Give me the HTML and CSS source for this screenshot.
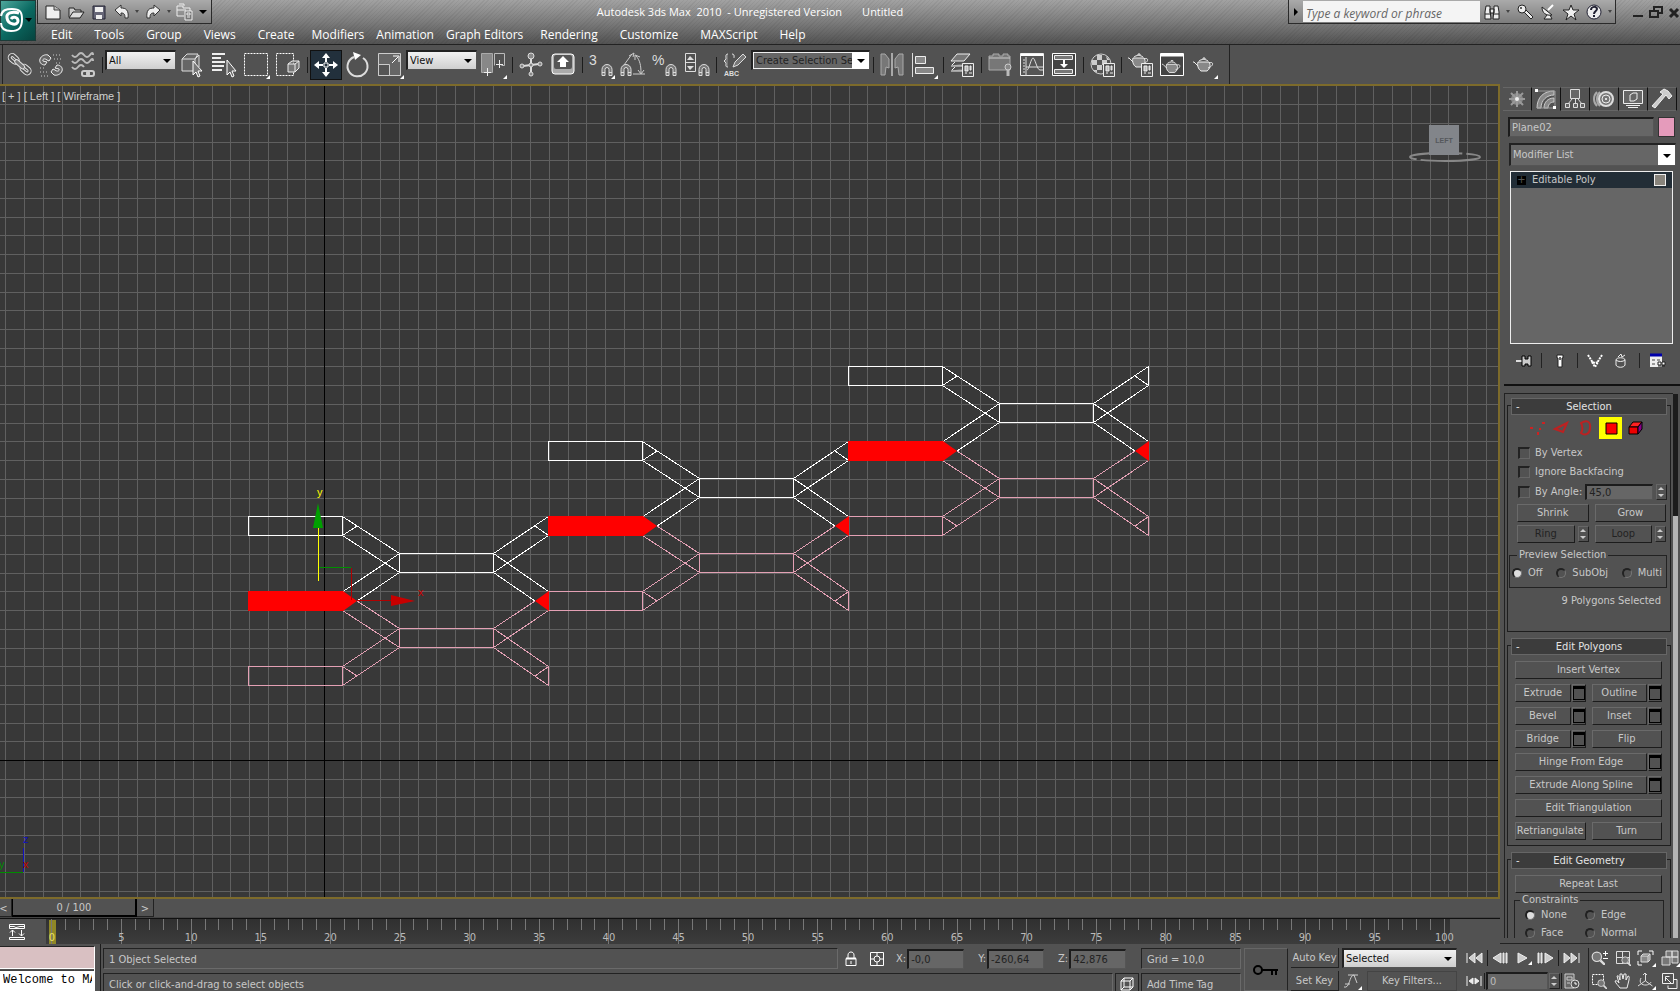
FILE: index.html
```html
<!DOCTYPE html>
<html lang="en">
<head>
  <meta charset="UTF-8" />
  <meta name="viewport" content="width=device-width, initial-scale=1" />
  <title>Autodesk 3ds Max 2010 - Unregistered Version</title>
  <link rel="stylesheet" href="styles.css">
</head>
<body>
  <!-- shared icon parts -->
  <svg class="defs" width="0" height="0">
    <symbol id="magnet" viewBox="0 0 12 13"><path d="M1 12V6a5 5 0 0 1 10 0v6H8V6a2 2 0 0 0-4 0v6zM1 9h3M8 9h3" fill="#777" stroke="#ddd"/></symbol>
    <symbol id="panel" viewBox="0 0 12 14"><path d="M.5.5h11v13H.5z" fill="#555" stroke="#eee"/><path d="M3 3h3v5H3zM8 3h1v4H8zM3 10h2M7 10h3" fill="#bbb" stroke="#eee"/></symbol>
    <symbol id="teapot" viewBox="0 0 22 16"><path d="M5 5h11c2 3 1 7-2 9H8C5 12 4 8 5 5z" fill="#888" stroke="#eee"/><path d="M6 4c2-2 7-2 9 0M10 2V1h2v1M5 9 1 5H0M16 6c5-2 5 3-1 5" fill="none" stroke="#eee"/></symbol>
    <symbol id="corner" viewBox="0 0 4 4"><path d="M4 0v4H0z" fill="#fff"/></symbol>
    <symbol id="lens" viewBox="0 0 12 12"><circle cx="5" cy="5" r="4" fill="#777" stroke="#ddd"/><path d="m8 8 4 4" stroke="#ddd" stroke-width="2"/></symbol>
  </svg>

  <header class="titlebar">
    <button class="app-btn" aria-label="Application menu">
      <svg width="36" height="41" viewBox="0 0 36 41"><path d="M1 16C2 10 6 9 12 9c8 0 10 3 10 10 0 9-3 12-11 12C4 31 1 28 1 23" fill="none" stroke="#fff" stroke-width="2"/><path d="M19 13C12 11 6 13 7 18c1 7 11 8 11 3 0-4-5-5-7-2" fill="none" stroke="#fff" stroke-width="3"/><path d="M25 18h7l-3 4z" fill="#000"/></svg>
    </button>
    <div class="title-rows">
      <div class="title-row">
        <div class="quick">
          <button aria-label="New"><svg width="18" height="18"><path d="M2 3h8l6 4v9H2z" fill="#eee" stroke="#222"/><path d="M10 3v4h6" fill="#bbb" stroke="#444"/></svg></button>
          <button aria-label="Open"><svg width="18" height="18"><path d="M2 14V5h5l1 2h6v2" fill="#ccc" stroke="#222"/><path d="m2 15 4-6h11l-4 6z" fill="#ddd" stroke="#222"/></svg></button>
          <button aria-label="Save"><svg width="18" height="18"><path d="M3 3h12v13H3z" fill="#667" stroke="#223"/><path d="M5 4h8v5H5zM6 12h6v4H6z" fill="#eee"/></svg></button>
          <button aria-label="Undo"><svg width="18" height="18"><path d="m2 7 6-5v3c5 0 8 2 7 10h-3c0-4-1-5-4-5v3z" fill="#eee" stroke="#333"/></svg></button>
          <i class="tri dim"></i>
          <button aria-label="Redo"><svg width="18" height="18"><path d="m16 7-6-5v3c-5 0-8 2-7 10h3c0-4 1-5 4-5v3z" fill="#eee" stroke="#333"/></svg></button>
          <i class="tri dim"></i>
          <button aria-label="Project folder"><svg width="18" height="18"><path d="M1 3h6v2h7v4M1 3v10h7M3 1h5v2M1 7h9" fill="none" stroke="#eee"/><path d="M9 8h7v9H9zM11 10h3v2h-3zM11 14h3" fill="#777" stroke="#eee"/></svg></button>
          <i class="tri bar"></i>
        </div>
        <div class="title-text"><span>Autodesk 3ds Max&nbsp; 2010&nbsp; - Unregistered Version</span><span>Untitled</span></div>
        <div class="info">
          <i class="tri right"></i>
          <input type="text" placeholder="Type a keyword or phrase" aria-label="Search">
          <button aria-label="Search"><svg width="18" height="18"><path d="M3 3h4v4l1 9H2V9zM11 3h4l1 6v7h-6l1-9zM7 6h4v4H7z" fill="#eee" stroke="#222"/><path d="M2 11h6M10 11h6" stroke="#222"/></svg></button>
          <i class="tri dim"></i>
          <button aria-label="Subscription"><svg width="18" height="18"><path d="m8 9 7 7 2-2-7-7" fill="#eee" stroke="#222"/><circle cx="6" cy="6" r="4" fill="#eee" stroke="#222"/><circle cx="5" cy="5" r="1" fill="#333"/></svg></button>
          <button aria-label="Communication"><svg width="18" height="18"><path d="M3 4c0 6 4 9 10 8zM8 12l-3 4h8l-2-4" fill="#eee" stroke="#222"/><path d="m9 7 5-5" stroke="#fff" stroke-width="2"/></svg></button>
          <button aria-label="Favorites"><svg width="18" height="18"><path d="m9 2 2 5h6l-5 4 2 6-5-4-5 4 2-6-5-4h6z" fill="#eee" stroke="#222"/></svg></button>
          <button aria-label="Help"><svg width="18" height="18"><circle cx="9" cy="9" r="7" fill="#eee" stroke="#223"/><path d="M6 7c0-4 6-4 6-1 0 2-3 2-3 5M9 12v2" fill="none" stroke="#223" stroke-width="2"/></svg></button>
          <i class="tri dim"></i>
        </div>
        <div class="win-btns">
          <button aria-label="Minimize"><svg width="12" height="14"><path d="M1 11h10" stroke="#222" stroke-width="2"/></svg></button>
          <button aria-label="Restore"><svg width="14" height="14"><path d="M1 6h8v6H1zM5 5V2h8v6h-3" fill="none" stroke="#222" stroke-width="2"/></svg></button>
          <button aria-label="Close"><svg width="12" height="14"><path d="m2 4 8 8M10 4l-8 8" stroke="#222" stroke-width="3"/></svg></button>
        </div>
      </div>
      <nav class="menu">
        <a href="#">Edit</a><a href="#">Tools</a><a href="#">Group</a><a href="#">Views</a><a href="#">Create</a><a href="#" class="tight">Modifiers</a><a href="#" class="tight">Animation</a><a href="#" class="tight">Graph Editors</a><a href="#">Rendering</a><a href="#">Customize</a><a href="#">MAXScript</a><a href="#">Help</a>
      </nav>
    </div>
  </header>

  <div class="toolbar">
    <div class="tools">
      <button aria-label="Select and Link"><svg width="28" height="28"><g fill="none" stroke="#e4e4e4"><g transform="rotate(42 14 14)"><rect x="0" y="9" width="12" height="8" rx="4"/><rect x="3" y="12" width="6" height="2" rx="1"/><rect x="16" y="9" width="12" height="8" rx="4"/><rect x="19" y="12" width="6" height="2" rx="1"/><rect x="8" y="11" width="12" height="4" rx="2" fill="#777"/></g></g></svg></button>
      <button aria-label="Unlink Selection"><svg width="28" height="28"><path d="M8 14C4 14 2 11 3 8s5-5 8-4l3 3-2 3-2-1C8 7 5 8 6 10l4 1zM20 14c4 0 6 3 5 6s-5 5-8 4l-3-3 2-3 2 1c2 2 5 1 4-1l-4-1z" fill="#666" stroke="#eee"/><path d="M16 4h8M17 8h8M19 12h6M3 17h6M3 21h8M4 25h7" stroke="#ccc" stroke-dasharray="1 2"/></svg></button>
      <button aria-label="Bind to Space Warp"><svg width="28" height="28"><path d="M3 4q3 4 6 0t6 0 6 0 3 0M3 10q3 4 6 0t6 0 6 0 3 0M3 16q3 4 6 0t6 0" fill="none" stroke="#bbb" stroke-width="2"/><rect x="13" y="20" width="7" height="5" rx="2" fill="none" stroke="#ccc" stroke-width="2"/><rect x="18" y="20" width="7" height="5" rx="2" fill="none" stroke="#ccc" stroke-width="2"/></svg></button>
      <i class="sep"></i>
      <label class="select w70"><select aria-label="Selection filter"><option>All</option></select></label>
      <button aria-label="Select Object"><svg width="28" height="28"><path d="m4 8 5-5h11l-3 5v12H4zM4 8h13l4-4v12" fill="#666" stroke="#ddd"/><path d="M15 10v14l3-3 2 5 2-1-2-5h4z" fill="#777" stroke="#fff"/></svg></button>
      <button aria-label="Select by Name"><svg width="28" height="28"><path d="M2 3h13M2 7h9M2 11h13M2 15h12M2 19h10" stroke="#eee" stroke-width="2"/><path d="M17 9v15l3-3 2 5 2-1-2-5h4z" fill="#666" stroke="#fff"/></svg></button>
      <button aria-label="Rectangular Selection Region"><svg width="28" height="28"><path d="M2.500 2.500h23v22h-23z" fill="none" stroke="#fff" stroke-dasharray="2 1"/><use href="#corner" x="24" y="24" width="4" height="4"/></svg></button>
      <button aria-label="Window/Crossing"><svg width="28" height="28"><path d="M2.500 2.500h17v22h-17z" fill="none" stroke="#fff" stroke-dasharray="2 1"/><path d="m14 13 4-3h7v7l-4 4h-7zM14 13h7l4-3M21 13v8" fill="#777" stroke="#eee"/></svg></button>
      <i class="sep"></i>
      <button class="on" aria-label="Select and Move"><svg width="28" height="28"><path d="m14 2 4 5h-3v4h-2V7h-3zM14 26l4-5h-3v-4h-2v4h-3zM2 14l5-4v3h4v2H7v3zM26 14l-5-4v3h-4v2h4v3z" fill="#fff"/><path d="M12 12h4v4h-4z" fill="none" stroke="#fff"/></svg></button>
      <button aria-label="Select and Rotate"><svg width="28" height="28"><path d="M19 7a10 10 0 1 1-9-1" fill="none" stroke="#ddd" stroke-width="2"/><path d="m9 1 8 3-6 5z" fill="#fff"/></svg></button>
      <button aria-label="Select and Scale"><svg width="28" height="28"><path d="M2.500 2.500h22v22h-22z" fill="#666" stroke="#ccc"/><path d="M2.500 13.500h11v11h-11z" fill="#555" stroke="#ccc"/><path d="m16 12 6-6M17 5h6v6" fill="none" stroke="#fff"/><use href="#corner" x="24" y="24" width="4" height="4"/></svg></button>
      <label class="select w70"><select aria-label="Reference coordinate system"><option>View</option></select></label>
      <button aria-label="Use Pivot Point Center"><svg width="28" height="28"><path d="M2.500 2.500h11v19h-11z" fill="#888" stroke="#aaa"/><path d="M15.500 14.500v-12h10v12h-3" fill="none" stroke="#bbb"/><path d="M8.500 17v8M5 21.500h7M20.500 9v8M17 13.500h7" stroke="#eee"/><use href="#corner" x="24" y="24" width="4" height="4"/></svg></button>
      <i class="sep"></i>
      <button aria-label="Select and Manipulate"><svg width="28" height="28"><g fill="#888" stroke="#ddd"><path d="M14 7v14M6 15l16-2" stroke-width="2"/><circle cx="14" cy="5" r="3"/><circle cx="14" cy="23" r="2"/><circle cx="5" cy="15" r="2"/><circle cx="23" cy="13" r="2"/><circle cx="14" cy="14" r="2"/></g></svg></button>
      <button aria-label="Keyboard Shortcut Override"><svg width="28" height="28"><rect x="3" y="3" width="22" height="20" rx="3" fill="#aaa" stroke="#fff"/><rect x="5" y="4" width="18" height="14" rx="2" fill="#555"/><path d="m14 5 6 6h-3v5h-6v-5H8z" fill="#fff"/></svg></button>
      <i class="sep"></i>
      <button aria-label="Snaps Toggle"><svg width="28" height="28"><text x="2" y="14" class="ico-num">3</text><use href="#magnet" x="14" y="12" width="12" height="14"/><use href="#corner" x="24" y="24" width="4" height="4"/></svg></button>
      <button aria-label="Angle Snap"><svg width="28" height="28"><path d="m5 14 8-11M14 23h12M17 5c4 4 5 10 5 17M10 5l5-3-1 4M19 19l3 4 3-4M16 9V4l5 2" fill="none" stroke="#ccc"/><use href="#magnet" x="1" y="12" width="12" height="14"/></svg></button>
      <button aria-label="Percent Snap"><svg width="28" height="28"><text x="1" y="14" class="ico-num">%</text><use href="#magnet" x="14" y="12" width="12" height="14"/></svg></button>
      <button aria-label="Spinner Snap"><svg width="28" height="28"><path d="M2.500 2.500h10v18h-10zM2.500 11.500h10" fill="none" stroke="#ddd"/><path d="m4 9 3-4 4 4zM4 15l3 4 4-4z" fill="#ddd"/><use href="#magnet" x="15" y="12" width="12" height="14"/></svg></button>
      <i class="sep"></i>
      <button aria-label="Edit Named Selection Sets"><svg width="28" height="28"><path d="M7 3c-3 0-2 3-2 5l-2 2 2 2c0 2-1 4 2 4M11 3c3 0 2 3 2 4M12 16l2-5 8-8 3 3-8 8z" fill="#777" stroke="#ddd"/><text x="3" y="25" class="ico-abc">ABC</text></svg></button>
      <label class="select dark w119"><select aria-label="Named selection sets"><option>Create Selection Set</option></select></label>
      <i class="sep"></i>
      <button aria-label="Mirror"><svg width="28" height="28"><path d="M3 3h4l4 5v9l-3-1-1 8H3zM25 3h-4l-4 5v9l3-1 1 8h4z" fill="#777" stroke="#aaa"/><path d="M14 2v23" stroke="#fff"/></svg></button>
      <button aria-label="Align"><svg width="28" height="28"><path d="M2.500 2v24" stroke="#ddd"/><path d="M5.500 5.500h10v7h-10zM5.500 16.500h18v6h-18z" fill="#888" stroke="#eee"/><use href="#corner" x="24" y="24" width="4" height="4"/></svg></button>
      <i class="sep"></i>
      <button aria-label="Layer Manager"><svg width="28" height="28"><path d="m9 3h13l-6 7H3zM3 15h11l2-3M3 20h11l2-3M4 14l3-3M4 19l3-3" fill="#777" stroke="#eee"/><use href="#panel" x="14" y="12" width="12" height="14"/></svg></button>
      <i class="sep"></i>
      <button aria-label="Graphite Modeling Tools"><svg width="28" height="28"><path d="M3 5h4V3h6v2h4V3h5v2h2v14H3z" fill="#777" stroke="#aaa"/><path d="M3 7h21" stroke="#ccc"/><path d="M22 17v8" stroke="#bbb" stroke-width="3"/><circle cx="22" cy="16" r="3" fill="#888" stroke="#ccc"/></svg></button>
      <button aria-label="Curve Editor"><svg width="28" height="28"><path d="M2.500 2.500h23v22h-23z" fill="#555" stroke="#eee"/><path d="M3 4h22" stroke="#fff" stroke-width="2"/><path d="M8 6v19M5 9h2M5 12h2M5 15h2M5 18h2M5 21h2M8 16h17M9 19c2 0 4-12 6-12s4 12 7 12h3" fill="none" stroke="#ddd"/></svg></button>
      <button aria-label="Schematic View"><svg width="28" height="28"><path d="M2.500 2.500h23v22h-23z" fill="#444" stroke="#fff"/><path d="M4.500 4.500h18v4h-18zM4.500 18.500h18v4h-18z" fill="#777" stroke="#eee"/><path d="M14 9v6" stroke="#fff" stroke-width="2"/><path d="M10 13h8l-4 4z" fill="#fff"/></svg></button>
      <i class="sep"></i>
      <button aria-label="Material Editor"><svg width="28" height="28"><circle cx="13" cy="13" r="10" fill="#555" stroke="#ccc"/><path d="M9 4h5v5H9zM4 9h5v5H4zM14 9h5v5h-5zM9 14h5v5H9zM18 5l4 4h-3zM5 19h4v3z" fill="#ccc"/><use href="#panel" x="15" y="12" width="12" height="14"/></svg></button>
      <i class="sep"></i>
      <button aria-label="Render Setup"><svg width="28" height="28"><use href="#teapot" x="2" y="2" width="22" height="16"/><use href="#panel" x="15" y="12" width="12" height="14"/></svg></button>
      <button aria-label="Rendered Frame Window"><svg width="28" height="28"><path d="M2.500 2.500h23v22h-23z" fill="#444" stroke="#fff"/><path d="M3 4h22" stroke="#fff" stroke-width="3"/><use href="#teapot" x="4" y="8" width="20" height="16"/></svg></button>
      <button aria-label="Render Production"><svg width="28" height="28"><use href="#teapot" x="3" y="6" width="22" height="16"/><use href="#corner" x="24" y="24" width="4" height="4"/></svg></button>
    </div>
  </div>

  <main class="work">
    <section class="stage">
      <div class="viewport">
        <svg class="scene" width="100%" height="100%">
          <g transform="translate(0 -86)">
            <g id="grid"></g>
            <g class="axis"><line x1="324" y1="0" x2="324" y2="2000"/><line x1="0" y1="760" x2="100%" y2="760"/></g>
            <defs>
              <g id="upper">
                <path d="M248.500 516.500H342.500V535.500H248.500ZM399.500 553.500H493.500V572.500H399.500Z"/>
                <path d="M342.500 516.500 399.500 553.500M342.500 535.500 399.500 572.500M342.500 535.500 357 526M399.500 553.500 343 591.500M399.500 572.500 357 601M493.500 553.500 548.500 516.500V535.500L493.500 572.500M548.500 535.500 535 526M493.500 553.500 548.500 591.500M493.500 572.500 535 601"/>
              </g>
              <g id="lower">
                <path d="M248.500 666.500H342.500V685.500H248.500ZM399.500 628.500H493.500V647.500H399.500Z"/>
                <path d="M357 601 399.500 628.500 342.500 666.500 357 676M342.500 610.500 399.500 647.500 342.500 685.500M535 601 493.500 628.500 548.500 666.500V685.500L493.500 647.500 548.500 610.500M548.500 666.500 535 676"/>
              </g>
              <path id="picked" d="M248 591H343L357 601 343 611H248ZM549 591V611L535 601Z"/>
            </defs>
            <g class="mesh-low"><use href="#lower"/><use href="#lower" x="300" y="-75"/><use href="#lower" x="600" y="-150"/></g>
            <g class="mesh-up"><use href="#upper"/><use href="#upper" x="300" y="-75"/><use href="#upper" x="600" y="-150"/></g>
            <g fill="#f00"><use href="#picked"/><use href="#picked" x="300" y="-75"/><use href="#picked" x="600" y="-150"/></g>
            <!-- move gizmo -->
            <g class="gizmo">
              <path d="M318.500 581V520" stroke="#ff0"/>
              <path d="M319 567.500H351" stroke="#009000"/>
              <path d="M351.500 568V600M357 600.500H392" stroke="#b00000"/>
            </g>
            <path d="M318 503 323 528H313Z" fill="#00a000"/>
            <path d="M391 595 415 601 391 606Z" fill="#c80000"/>
            <text x="317" y="496" fill="#ff0">y</text>
            <text x="418" y="596" fill="#c00">x</text>
          </g>
        </svg>
        <span class="view-label">[ + ] [ Left ] [ Wireframe ]</span>
        <div class="viewcube">
          <svg width="80" height="40"><ellipse cx="40" cy="33" rx="35" ry="4" fill="none" stroke="#888" stroke-width="2" stroke-dasharray="60 4"/><path d="M24 1h30v30H24z" fill="#82858a"/><text x="39" y="19" text-anchor="middle">LEFT</text></svg>
        </div>
        <svg class="tripod" width="34" height="44"><path d="M23.500 14V38" stroke="#1010c0"/><path d="M0 38.500H23" stroke="#008c00"/><text x="23" y="9" fill="#1010c0">z</text><text x="-1" y="34" fill="#008c00">y</text><text x="23" y="34" fill="#c00000">x</text></svg>
      </div>
      <div class="time-slider">
        <button class="step" aria-label="Previous frame">&lt;</button><button class="thumb">0 / 100</button><button class="step next" aria-label="Next frame">&gt;</button>
      </div>
      <div class="trackbar">
        <button class="mini-curve" aria-label="Open Mini Curve Editor"><svg width="18" height="18"><path d="M1.500 1.500h15v4h-15zM1.500 14.500h15v2h-15zM4.500 13V7M2 9.500l2.500-2.500 2.500 2.500M13.500 7v6M11 10.500l2.500 2.500 2.500-2.500M2 3.500h4l2 1 4-1h4" fill="none" stroke="#fff"/></svg></button>
        <svg id="ruler" class="ruler" width="100%" height="25"></svg>
      </div>
    </section>

    <aside class="panel">
      <div class="tabs">
        <button aria-label="Create"><svg width="24" height="22"><circle cx="12" cy="11" r="6" fill="#888"/><path d="M12 3v16M4 11h16M6 5l12 12M18 5 6 17" stroke="#999" stroke-width="2"/><circle cx="12" cy="11" r="2" fill="#eee"/></svg></button>
        <button class="active" aria-label="Modify"><svg width="24" height="22"><path d="M3 20C3 9 10 3 20 3v4C13 7 7 12 7 20zM10 20c0-6 4-10 10-10v4c-4 0-6 3-6 6z" fill="#888" stroke="#ccc"/><path d="M3 3h18v17H3" fill="none" stroke="#999"/><path d="M1 1h3v3H1zM19 18h3v3h-3z" fill="#fff"/></svg></button>
        <button aria-label="Hierarchy"><svg width="24" height="22"><path d="M7.500 1.500h9v9h-9zM2.500 15.500h4v4h-4zM10.500 15.500h4v4h-4zM17.500 15.500h4v4h-4z" fill="#666" stroke="#ddd"/><path d="M12.500 11v5M9 11l-4 5M15 11l4 5" stroke="#ddd"/></svg></button>
        <button aria-label="Motion"><svg width="24" height="22"><path d="M5 4c-4 4-4 10 0 14M8 4c-4 4-4 10 0 14" fill="none" stroke="#aaa" stroke-width="2"/><circle cx="14" cy="11" r="7" fill="#777" stroke="#ddd" stroke-width="2"/><circle cx="14" cy="11" r="4" fill="#777" stroke="#eee"/><circle cx="14" cy="11" r="1" fill="#fff"/></svg></button>
        <button aria-label="Display"><svg width="24" height="22"><path d="M2.500 2.500h19v13h-19z" fill="#666" stroke="#eee"/><path d="m9 7 3-2h4v6l-3 2H9zM5 17.500h14M7 19.500h10" fill="none" stroke="#eee"/></svg></button>
        <button aria-label="Utilities"><svg width="24" height="22"><path d="m10 4 4-3 4 2 4 5-3 3-3-4L5 20l-3-2L13 6z" fill="#ccc" stroke="#eee"/></svg></button>
      </div>
      <div class="name-row">
        <input type="text" class="sunk" value="Plane02" aria-label="Object name">
        <button class="swatch" aria-label="Object color"></button>
      </div>
      <label class="select list"><select aria-label="Modifier List"><option>Modifier List</option></select></label>
      <div class="stack">
        <div class="stack-row"><span class="plus">+</span><span>Editable Poly</span><i class="box"></i></div>
      </div>
      <div class="stack-tools">
        <button aria-label="Pin Stack"><svg width="18" height="16"><path d="M1 8h7" stroke="#ddd" stroke-width="2"/><path d="M7 3v10h3v-2h3v2h3V3h-3v3h-3V3z" fill="#ccc" stroke="#000"/></svg></button><i></i>
        <button aria-label="Show End Result"><svg width="18" height="16"><path d="M6 2h6v3h-1v9H7V5H6z" fill="#fff" stroke="#222"/><path d="M8 4h2v3H8z" fill="#666"/></svg></button><i></i>
        <button aria-label="Make Unique"><svg width="18" height="16"><path d="m2 2 5 8M16 2l-5 8M6 9l3 5 3-5-3 1z" fill="none" stroke="#fff" stroke-width="2" stroke-dasharray="2 1"/></svg></button>
        <button aria-label="Remove Modifier"><svg width="18" height="16"><path d="M4 7v5c1 3 8 3 9 0V7c-2 2-7 2-9 0 0-3 9-3 9 0M6 4l3-3 1 3 3-2" fill="none" stroke="#eee"/></svg></button><i></i>
        <button aria-label="Configure Modifier Sets"><svg width="18" height="16"><path d="M2 1h12v13H2z" fill="#eee"/><path d="M2 2h12" stroke="#00a" stroke-width="3"/><path d="M4 6h3v2H4zM4 10h3v2H4zM9 6h3v2H9z" fill="#999"/><path d="M10 9h3v3h-3zM14 9h3v3h-3zM10 13h7" fill="#fff" stroke="#222"/></svg></button>
      </div>

      <div class="rollouts">
        <div class="rollout-list">
          <section class="rollout selection">
            <h2><span>-</span>Selection</h2>
            <div class="subobj">
              <button aria-label="Vertex"><svg width="20" height="18"><path d="M2 8h3v2H2zM9 13h2v3H9zM11 9h2v2h-2zM14 3h3v2h-3z" fill="#c22"/></svg></button>
              <button aria-label="Edge"><svg width="20" height="18"><path d="m3 10 12-6-4 9z" fill="none" stroke="#b22" stroke-width="2"/></svg></button>
              <button aria-label="Border"><svg width="20" height="18"><path d="M5 4c6-4 10-1 9 5 0 6-5 8-9 5 2-3 2-6 0-10z" fill="none" stroke="#b22" stroke-width="2"/></svg></button>
              <button class="picked" aria-label="Polygon"><svg width="20" height="18"><path d="M5 4h11v11H5z" fill="#f00" stroke="#000"/></svg></button>
              <button aria-label="Element"><svg width="20" height="18"><path d="m3 8 4-5h9l-4 5z" fill="#f22" stroke="#000"/><path d="M3 8h9v7H3z" fill="#e00" stroke="#000"/><path d="m12 8 4-5v7l-4 5z" fill="#808" stroke="#000"/></svg></button>
            </div>
            <label class="check"><input type="checkbox">By Vertex</label>
            <label class="check"><input type="checkbox">Ignore Backfacing</label>
            <div class="check angle"><label><input type="checkbox">By Angle:</label><input type="text" class="sunk off" value="45,0" aria-label="Angle"><span class="spin"></span></div>
            <div class="pair"><button class="btn">Shrink</button><button class="btn">Grow</button></div>
            <div class="pair"><div class="with-spin"><button class="btn" disabled>Ring</button><span class="spin"></span></div><div class="with-spin"><button class="btn" disabled>Loop</button><span class="spin"></span></div></div>
            <fieldset class="preview">
              <legend>Preview Selection</legend>
              <label><input type="radio" name="preview" checked>Off</label>
              <label><input type="radio" name="preview">SubObj</label>
              <label><input type="radio" name="preview">Multi</label>
            </fieldset>
            <p class="count">9 Polygons Selected</p>
          </section>

          <section class="rollout">
            <h2><span>-</span>Edit Polygons</h2>
            <div class="cmds">
              <button class="btn">Insert Vertex</button>
              <div class="pair"><div class="cmd"><button class="btn">Extrude</button><button class="btn opt" aria-label="Extrude settings"></button></div><div class="cmd"><button class="btn">Outline</button><button class="btn opt" aria-label="Outline settings"></button></div></div>
              <div class="pair"><div class="cmd"><button class="btn">Bevel</button><button class="btn opt" aria-label="Bevel settings"></button></div><div class="cmd"><button class="btn">Inset</button><button class="btn opt" aria-label="Inset settings"></button></div></div>
              <div class="pair"><div class="cmd"><button class="btn">Bridge</button><button class="btn opt" aria-label="Bridge settings"></button></div><button class="btn">Flip</button></div>
              <div class="cmd"><button class="btn">Hinge From Edge</button><button class="btn opt" aria-label="Hinge settings"></button></div>
              <div class="cmd"><button class="btn">Extrude Along Spline</button><button class="btn opt" aria-label="Spline settings"></button></div>
              <button class="btn">Edit Triangulation</button>
              <div class="pair"><button class="btn">Retriangulate</button><button class="btn">Turn</button></div>
            </div>
          </section>

          <section class="rollout">
            <h2><span>-</span>Edit Geometry</h2>
            <div class="cmds"><button class="btn">Repeat Last</button></div>
            <fieldset class="constraints">
              <legend>Constraints</legend>
              <label><input type="radio" name="constraint" checked>None</label>
              <label><input type="radio" name="constraint">Edge</label>
              <label><input type="radio" name="constraint">Face</label>
              <label><input type="radio" name="constraint">Normal</label>
            </fieldset>
          </section>
        </div>
        <div class="scroll"></div>
      </div>
    </aside>
  </main>

  <footer class="status">
    <div class="listener"><div class="pink"></div><div class="out"><span>Welcome to MAXScript.</span></div></div>
    <div class="messages">
      <div class="msg-row">
        <div class="well grow">1 Object Selected</div>
        <div class="coords">
          <button aria-label="Selection Lock"><svg width="14" height="18"><path d="M2 8.500h10v7H2zM4 8V5c0-4 6-4 6 0v3M7 11v3" fill="none" stroke="#fff"/><path d="M2 8.500h10" stroke="#fff" stroke-width="2"/></svg></button>
          <button aria-label="Absolute Mode"><svg width="16" height="18"><path d="M1.500 2.500h13v13h-13zM1 9h4M11 9h4M8 2v4M8 12v4" fill="none" stroke="#fff"/><circle cx="8" cy="9" r="3" fill="none" stroke="#fff"/></svg></button>
          <label>X:<input type="text" class="sunk" value="-0,0"></label>
          <label>Y:<input type="text" class="sunk" value="-260,64"></label>
          <label>Z:<input type="text" class="sunk" value="42,876"></label>
        </div>
        <div class="well tag">Grid = 10,0</div>
      </div>
      <div class="msg-row">
        <div class="well grow">Click or click-and-drag to select objects</div>
        <button class="degrade" aria-label="Adaptive Degradation"><svg width="18" height="16"><path d="M3 5h9v9H3zM6 2h9v9M3 5l3-3M12 5l3-3M12 14l3-3M6 2v9h9M3 14l3-3" fill="none" stroke="#fff"/></svg></button>
        <div class="well tag">Add Time Tag</div>
      </div>
    </div>
    <button class="big-key" aria-label="Set Keys"><svg width="26" height="14"><circle cx="5" cy="7" r="4" fill="none" stroke="#000" stroke-width="2"/><path d="M9 7h16M19 7v5M23 7v5" stroke="#000" stroke-width="2"/></svg></button>
    <div class="keys">
      <button class="auto">Auto Key</button>
      <label class="select"><select aria-label="Key selection"><option>Selected</option></select></label>
      <button class="auto">Set Key</button>
      <div class="filters"><button aria-label="Default tangents"><svg width="20" height="18"><path d="M2 15c6 2 5-12 10-12M6 3h10M12 3l3 8M3 12h5" fill="none" stroke="#ccc"/><use href="#corner" x="16" y="14" width="4" height="4"/></svg></button><button class="btn">Key Filters...</button></div>
    </div>
    <div class="transport">
      <div class="row">
        <button aria-label="Go to Start"><svg width="18" height="14"><path d="M2 2v10M10 2v10L4 7zM17 2v10l-6-5z" fill="#ccc" stroke="#eee"/></svg></button><i></i>
        <button aria-label="Previous Frame"><svg width="18" height="14"><path d="M9 2v10L1 7zM11 2h1v10h-1zM14 2h1v10h-1z" fill="#ccc" stroke="#eee"/></svg></button>
        <button aria-label="Play"><svg width="18" height="14"><path d="M4 2v10l9-5z" fill="#ccc" stroke="#eee"/><use href="#corner" x="14" y="10" width="4" height="4"/></svg></button>
        <button aria-label="Next Frame"><svg width="18" height="14"><path d="M9 2v10l8-5zM2 2h1v10H2zM5 2h1v10H5z" fill="#ccc" stroke="#eee"/></svg></button><i></i>
        <button aria-label="Go to End"><svg width="18" height="14"><path d="M16 2v10M8 2v10l6-5zM1 2v10l6-5z" fill="#ccc" stroke="#eee"/></svg></button>
      </div>
      <div class="row">
        <button aria-label="Key Mode"><svg width="18" height="14"><path d="M2 2v10M16 2v10M8 4v6L4 7zM10 4v6l4-3z" fill="#eee" stroke="#eee"/></svg></button><i></i>
        <input type="text" class="sunk" value="0" aria-label="Current frame"><span class="spin"></span><i></i>
        <button aria-label="Time Configuration"><svg width="18" height="16"><path d="M2 1h9v14H2zM4 4h5v3H4zM4 10h3" fill="#666" stroke="#ccc"/><circle cx="12" cy="11" r="4" fill="#555" stroke="#ddd"/><path d="M12 9v2h2" fill="none" stroke="#fff"/></svg></button>
      </div>
    </div>
    <div class="nav">
      <button aria-label="Zoom"><svg width="20" height="18"><use href="#lens" x="2" y="2" width="14" height="14"/><path d="M14 4.500h5M16.500 2v5M14 9.500h5" stroke="#fff"/></svg></button>
      <button aria-label="Zoom All"><svg width="20" height="18"><path d="M3.500 2.500h13v12h-13zM3 8.500h13M9.500 3v12" fill="none" stroke="#ddd"/><use href="#lens" x="8" y="7" width="10" height="10"/></svg></button>
      <button aria-label="Zoom Extents"><svg width="20" height="18"><path d="M2 6V2h4M13 2h4v4M2 12v4h4" fill="none" stroke="#fff"/><path d="m5 7 2-2h7v6l-2 2H5zM5 7h7l2-2M12 7v6" fill="#888" stroke="#ddd"/><use href="#corner" x="16" y="14" width="4" height="4"/></svg></button>
      <button aria-label="Zoom Extents All"><svg width="20" height="18"><path d="M6 2h6v6H6zM12 2h6v6h-6zM2 8h8v8H2zM12 8h6v6h-6z" fill="#777" stroke="#ddd"/><use href="#corner" x="16" y="14" width="4" height="4"/></svg></button>
      <button aria-label="Zoom Region"><svg width="20" height="18"><path d="M3.500 2.500h11v10h-11z" fill="none" stroke="#fff" stroke-dasharray="2 1"/><use href="#lens" x="8" y="7" width="10" height="10"/></svg></button>
      <button aria-label="Pan"><svg width="20" height="18"><path d="M7 16C5 13 3 12 2 9c2-1 3 1 4 2L4 4c2-1 2 1 3 4L7 2h2l1 5 1-5h2v6l2-4c2 0 1 2 1 4l-2 8z" fill="#555" stroke="#eee"/></svg></button>
      <button aria-label="Arc Rotate"><svg width="20" height="18"><path d="M9.500 1v8l7 5M9 9l-7 5M5 6c-4 8 8 9 10 4M7 3l2-2 2 2" fill="none" stroke="#ddd"/><use href="#corner" x="16" y="14" width="4" height="4"/></svg></button>
      <button aria-label="Maximize Viewport"><svg width="20" height="18"><path d="M2.500 1.500h11v10h-11zM14 7.500h3v9h-9v-3M5.500 9V4.500h4M5 5l6 6" fill="none" stroke="#eee"/></svg></button>
    </div>
  </footer>

  <script>
    const NS = 'http://www.w3.org/2000/svg';

    function add(parent, tag, attrs, text) {
      const el = document.createElementNS(NS, tag);
      for (const key in attrs) el.setAttribute(key, attrs[key]);
      if (text !== undefined) el.textContent = text;
      parent.appendChild(el);
    }

    // construction grid, measured from the world axes
    const grid = document.getElementById('grid');
    const cell = 18.74;
    for (let i = -17; i < 160; i++) {
      const x = Math.round(324 + i * cell);
      add(grid, 'line', { x1: x, x2: x, y1: 0, y2: 2000 });
    }
    for (let i = -36; i < 60; i++) {
      const y = Math.round(760 + i * cell);
      add(grid, 'line', { x1: 0, x2: '100%', y1: y, y2: y });
    }

    // track bar, one tick per frame
    const ruler = document.getElementById('ruler');
    add(ruler, 'rect', { x: 3, y: 1, width: 7, height: 24, fill: '#8f8726' });
    for (let f = 0; f <= 100; f++) {
      const x = (0.42 + f * 0.9918) + '%';
      add(ruler, 'line', { x1: x, x2: x, y1: 0, y2: f % 5 ? 11 : 25 });
      if (f % 5 === 0) {
        add(ruler, 'text', { x: x, y: 22, 'text-anchor': 'middle', class: f ? '' : 'now' }, f);
      }
    }
  </script>
</body>
</html>
```
FILE: styles.css
```css
* {
  box-sizing: border-box;
}
body {
  margin: 0;
  height: 100vh;
  display: flex;
  flex-direction: column;
  overflow: hidden;
  background: #525252;
  color: #c8c8c8;
  font-family: 'DejaVu Sans Condensed', 'DejaVu Sans', sans-serif;
  font-size: 11px;
  line-height: 14px;
}
button, input, select {
  font: inherit;
  color: inherit;
  margin: 0;
  padding: 0;
  border: 0;
  border-radius: 0;
  background: none;
  min-width: 0;
}
button {
  display: flex;
  align-items: center;
  justify-content: center;
}
svg {
  display: block;
  flex: none;
}
.defs {
  position: absolute;
}

/* title bar */
.titlebar {
  display: flex;
  height: 45px;
  flex: none;
  border-bottom: 1px solid #222;
  background: repeating-linear-gradient(135deg, rgba(0, 0, 0, 0.05) 0 1px, transparent 1px 3px), linear-gradient(#a2a2a2, #7c7c7c 50%, #525252);
  font-family: 'Open Sans', sans-serif;
  font-size: 12px;
  color: #fff;
}
.app-btn {
  width: 36px;
  height: 41px;
  background: linear-gradient(135deg, #4fa79c, #0b6a62 50%, #06443f);
  border: 1px solid #1c3b38;
}
.title-rows {
  flex: 1;
}
.title-row {
  display: flex;
  height: 24px;
}
.quick, .info {
  display: flex;
  align-items: center;
  border: 1px solid #2a2a2a;
  border-top: 0;
  background: linear-gradient(#aaa, #7c7c7c);
}
.quick {
  width: 175px;
  margin-left: 1px;
  padding: 0 2px 0 4px;
  justify-content: space-around;
}
.tri {
  width: 0;
  height: 0;
  border: 4px solid transparent;
  border-top-color: #000;
  border-bottom: 0;
}
.tri.dim {
  border-width: 3px 2px 0;
  border-top-color: #444;
}
.tri.right {
  border: 4px solid transparent;
  border-left-color: #000;
  border-right: 0;
  margin: 0 5px;
}
.tri.bar {
  box-shadow: 0 -6px 0 -4px #000;
}
.title-text {
  flex: 1;
  display: flex;
  justify-content: center;
  align-items: center;
  gap: 20px;
  font-size: 11px;
}
.info {
  width: 328px;
}
.info input {
  flex: 1;
  height: 21px;
  padding: 3px 0 0 3px;
  background: #f4f4f4;
  color: #555;
}
.info input::placeholder {
  color: #666;
  font-style: italic;
}
.info button {
  width: 23px;
}
.info .tri.dim {
  margin: 0 3px;
}
.win-btns {
  display: flex;
  gap: 5px;
  width: 64px;
  justify-content: flex-end;
}
.menu {
  display: flex;
  padding-left: 4px;
}
.menu a {
  color: #fff;
  text-decoration: none;
  padding: 2px 11px;
  line-height: 17px;
}
.menu a.tight {
  padding: 2px 6px;
}

/* main toolbar */
.toolbar {
  height: 39px;
  flex: none;
}
.tools {
  display: inline-flex;
  height: 39px;
  margin-left: 2px;
  padding-right: 9px;
  align-items: center;
  border-left: 1px solid #222;
  border-right: 1px solid #222;
}
.tools button {
  width: 32px;
  height: 30px;
}
.tools .on {
  background: #22303c;
  border: 1px solid #111;
}
.sep {
  width: 1px;
  height: 16px;
  margin: 0 2px 0 3px;
  background: #1c1c1c;
}
.ico-num {
  font: 14px 'Liberation Sans', sans-serif;
  fill: #ddd;
}
.ico-abc {
  font: 700 7px 'Liberation Sans', sans-serif;
  fill: #ddd;
}
.select {
  position: relative;
  display: flex;
  height: 20px;
  border: 2px solid #222;
  border-right: 1px solid #555;
  border-bottom: 1px solid #555;
  background: linear-gradient(#f2f2f2, #cfcfcf);
  color: #111;
}
.select::after {
  content: '';
  position: absolute;
  right: 4px;
  top: 7px;
  border: 4px solid transparent;
  border-top-color: #000;
  border-bottom: 0;
  pointer-events: none;
}
.select select {
  appearance: none;
  flex: 1;
  padding: 0 16px 0 2px;
  width: 100%;
}
.tools .select {
  align-self: flex-start;
  margin-top: 5px;
}
.w70 {
  width: 71px;
}
.w119 {
  width: 119px;
}
.select.dark, .select.list {
  background: #666;
}
.select.dark {
  color: #222;
}
.select.dark::before, .select.list::before {
  content: '';
  position: absolute;
  right: 0;
  top: 0;
  bottom: 0;
  width: 17px;
  background: #fff;
}
.select.dark select {
  border: 1px solid #eee;
}

/* work area */
.work {
  flex: 1;
  min-height: 0;
  display: flex;
}
.stage {
  flex: 1;
  min-width: 0;
  display: flex;
  flex-direction: column;
}
.viewport {
  position: relative;
  flex: 1;
  min-height: 0;
  overflow: hidden;
  background: #383838;
  border: 2px solid #7d6b2b;
  border-left: 0;
}
.scene {
  position: absolute;
  inset: 0;
}
.scene text, .tripod text {
  font: 11px 'Liberation Sans', sans-serif;
}
#grid line, .axis line {
  stroke: #606060;
  shape-rendering: crispEdges;
}
.axis line {
  stroke: #000;
}
.mesh-up, .mesh-low, .gizmo {
  fill: none;
  stroke: #fff;
  shape-rendering: crispEdges;
}
.mesh-low {
  stroke: #e3a0b4;
}
.view-label {
  position: absolute;
  left: 2px;
  top: 3px;
  font: 11px/14px 'Liberation Sans', sans-serif;
  color: #d0d0d0;
}
.viewcube {
  position: absolute;
  top: 38px;
  right: 13px;
}
.viewcube text {
  font: 700 7px 'Liberation Sans', sans-serif;
  fill: #55585c;
}
.tripod {
  position: absolute;
  left: 0;
  bottom: 19px;
}
.time-slider {
  display: flex;
  height: 19px;
  flex: none;
  border-bottom: 1px solid #444;
}
.time-slider button {
  border: 1px solid #222;
  border-width: 0 1px 1px 0;
  padding-top: 2px;
}
.time-slider .step {
  width: 12px;
  padding-right: 4px;
}
.time-slider .next {
  width: 17px;
  padding-right: 0;
}
.time-slider .thumb {
  width: 125px;
  border-width: 0 2px 2px 1px;
  border-color: #000;
}
.trackbar {
  display: flex;
  height: 26px;
  flex: none;
  border-top: 1px solid #111;
  padding-right: 50px;
}
.mini-curve {
  width: 46px;
  flex: none;
  padding-right: 12px;
}
.ruler {
  flex: 1;
  min-width: 0;
  overflow: visible;
  background: linear-gradient(#303030, #3c3c3c);
}
.ruler line {
  stroke: #777;
  shape-rendering: crispEdges;
}
.ruler text {
  fill: #bbb;
}
.ruler .now {
  fill: #e8e060;
}

/* command panel */
.panel {
  width: 180px;
  flex: none;
  display: flex;
  flex-direction: column;
  padding-left: 4px;
  border-bottom: 1px solid #222;
}
.tabs {
  display: flex;
  height: 27px;
  padding-top: 3px;
  margin: 0 3px 0 -1px;
}
.tabs button {
  flex: 1;
  border-right: 1px solid #111;
  border-bottom: 1px solid #666;
  border-top: 1px solid #666;
}
.tabs .active {
  border-bottom-color: transparent;
}
.sunk {
  background: #666;
  border: 2px solid #1c1c1c;
  border-right: 1px solid #555;
  border-bottom: 1px solid #555;
  padding-left: 2px;
}
.name-row {
  display: flex;
  gap: 4px;
  margin: 6px 5px 0 4px;
}
.name-row .sunk {
  flex: 1;
  height: 20px;
}
.swatch {
  width: 17px;
  height: 20px;
  background: #e59bbb;
  border: 1px solid #333;
}
.select.list {
  height: 23px;
  margin: 6px 4px 0 5px;
  color: #c8c8c8;
}
.select.list::after {
  top: 9px;
}
.stack {
  margin: 5px 7px 0 6px;
  height: 173px;
  flex: none;
  border: 1px solid #eee;
  background: #666;
}
.stack-row {
  display: flex;
  align-items: center;
  height: 16px;
  padding: 0 6px;
  gap: 6px;
  background: #222d36;
}
.stack-row .plus {
  width: 9px;
  height: 9px;
  line-height: 8px;
  text-align: center;
  background: #000;
  color: #555;
}
.stack-row .box {
  margin-left: auto;
  width: 12px;
  height: 12px;
  background: #88847c;
  border: 1px solid #eee;
}
.stack-tools {
  display: flex;
  align-items: center;
  justify-content: space-between;
  height: 40px;
  flex: none;
  margin: 0 14px 0 11px;
  padding-bottom: 7px;
}
.stack-tools i {
  width: 1px;
  height: 15px;
  background: #222;
}
.rollouts {
  flex: 1;
  min-height: 0;
  display: flex;
  border-top: 2px solid #111;
  padding-bottom: 5px;
}
.rollout-list {
  flex: 1;
  overflow: hidden;
  margin-top: 7px;
  padding: 3px 2px 0 2px;
  border-top: 1px solid #222;
  border-left: 1px solid #222;
}
.scroll {
  width: 5px;
  margin: 8px 2px 0 0;
  background: linear-gradient(#1c1c1c 0 122px, #b4b4b4 122px);
}
.rollout {
  margin: 8px 0 13px 0;
  border: 1px solid #1e1e1e;
  padding: 0 3px 5px;
}
.rollout h2 {
  position: relative;
  margin: -8px 0 6px;
  height: 17px;
  border: 1px solid #666;
  background: #3c3c3c;
  font-size: 11px;
  font-weight: 400;
  line-height: 15px;
  text-align: center;
  color: #e4e4e4;
}
.rollout h2 span {
  position: absolute;
  left: 4px;
}
.selection {
  height: 227px;
}
.subobj {
  display: flex;
  gap: 3px;
  height: 22px;
  margin: -4px 0 4px 16px;
}
.subobj button {
  width: 21px;
}
.subobj .picked {
  background: #ff0;
  width: 23px;
}
.check {
  display: flex;
  align-items: center;
  height: 19px;
  padding-left: 7px;
  white-space: nowrap;
}
.check label {
  display: flex;
  align-items: center;
}
input[type='checkbox'] {
  appearance: none;
  width: 12px;
  height: 12px;
  margin-right: 5px;
  border: 2px solid #222;
  border-right: 1px solid #666;
  border-bottom: 1px solid #666;
}
.angle {
  height: 21px;
  gap: 3px;
  margin-bottom: 2px;
}
.angle .sunk {
  flex: 1;
  height: 16px;
}
.off {
  color: #222;
}
.spin {
  position: relative;
  width: 11px;
  height: 16px;
  flex: none;
  border: 1px solid #666;
  border-right-color: #222;
  border-bottom-color: #222;
}
.spin::before, .spin::after {
  content: '';
  position: absolute;
  left: 1px;
  top: 2px;
  border: 3px solid transparent;
  border-top: 0;
  border-bottom-color: #ccc;
}
.spin::after {
  top: 9px;
  border-top: 3px solid #ccc;
  border-bottom: 0;
}
.btn {
  height: 18px;
  flex: 1;
  white-space: nowrap;
  border: 1px solid #6a6a6a;
  border-right-color: #1c1c1c;
  border-bottom-color: #1c1c1c;
}
.btn:disabled {
  color: #222;
}
.pair {
  display: grid;
  grid-template-columns: 1fr 1fr;
  gap: 6px;
}
.selection .pair {
  margin: 1px 1px 3px 6px;
}
.with-spin, .cmd {
  display: flex;
  gap: 3px;
  align-items: center;
}
.cmd {
  gap: 1px;
}
.cmds {
  display: flex;
  flex-direction: column;
  gap: 5px;
  padding: 0 5px 0 4px;
}
.cmds > .btn {
  flex: none;
}
.btn.opt {
  flex: none;
  width: 14px;
}
.opt::before {
  content: '';
  flex: none;
  width: 10px;
  height: 10px;
  border: 1px solid #000;
  border-top-width: 3px;
}
fieldset {
  margin: 0;
  padding: 0;
  min-width: 0;
  border: 1px solid #222;
}
legend {
  padding: 0 2px;
  margin-left: 5px;
}
fieldset label {
  display: flex;
  align-items: center;
  gap: 6px;
}
input[type='radio'] {
  appearance: none;
  width: 10px;
  height: 10px;
  border-radius: 50%;
  border: 2px solid #222;
  border-right: 1px solid #777;
  border-bottom: 1px solid #777;
}
input[type='radio']:checked {
  background: #ddd;
}
.preview {
  display: flex;
  justify-content: space-between;
  height: 40px;
  margin: 5px 0 0 -2px;
  padding: 0 4px 4px 2px;
}
.count {
  margin: 6px 6px 0;
  text-align: right;
}
.constraints {
  display: grid;
  grid-template-columns: 60px 1fr;
  row-gap: 4px;
  margin: 0 3px;
  padding: 1px 0 8px 10px;
}
.constraints legend {
  margin-left: -5px;
}

/* status area */
.status {
  display: flex;
  height: 47px;
  flex: none;
  overflow: hidden;
}
.listener {
  width: 95px;
  margin-top: 2px;
  border-right: 1px solid #fff;
  border-top: 1px solid #222;
}
.pink {
  height: 22px;
  background: #d9c0c2;
  border-bottom: 1px solid #fff;
}
.out {
  margin-top: 1px;
  border-top: 1px solid #444;
  padding: 0 2px 0 3px;
  height: 24px;
  background: #fff;
  color: #000;
  font: 12px/18px 'Liberation Mono', monospace;
}
.out span {
  display: block;
  overflow: hidden;
  white-space: nowrap;
}
.messages {
  flex: 1;
  margin-left: 5px;
  padding: 4px 0 0 2px;
  border-left: 1px solid #1c1c1c;
  display: flex;
  flex-direction: column;
  gap: 4px;
}
.msg-row {
  display: flex;
  height: 21px;
}
.well {
  padding: 4px 5px 2px;
  border: 1px solid #6a6a6a;
  border-top-color: #222;
  border-left-color: #222;
}
.grow {
  flex: 1;
}
.tag {
  width: 100px;
}
.coords {
  display: flex;
  align-items: center;
  width: 303px;
  padding-left: 6px;
}
.coords button {
  margin-right: 11px;
}
.coords label {
  display: flex;
  align-items: center;
  gap: 1px;
}
.coords label + label {
  margin-left: 14px;
}
.coords .sunk {
  width: 57px;
  height: 20px;
  color: #222;
}
.degrade {
  width: 24px;
  margin: 0 2px;
  border: 1px solid #222;
}
.big-key {
  width: 44px;
  margin: 4px 3px 0;
  border: 1px solid #666;
  border-right-color: #222;
}
.keys {
  display: grid;
  grid-template-columns: 48px 115px;
  grid-template-rows: 20px 20px;
  gap: 3px;
  margin-top: 4px;
}
.auto {
  border: 1px solid #222;
  border-width: 0 1px 1px 0;
  white-space: nowrap;
}
.filters {
  display: flex;
  gap: 5px;
}
.filters .btn {
  height: 20px;
  border-color: #444;
}
.transport {
  display: grid;
  grid-template-rows: 20px 20px;
  gap: 3px;
  width: 116px;
  margin: 4px 7px 0 8px;
}
.row {
  display: flex;
  align-items: center;
  justify-content: space-between;
}
.row i {
  width: 1px;
  height: 16px;
  background: #1c1c1c;
}
.transport .sunk {
  width: 62px;
  height: 18px;
  color: #bbb;
}
.nav {
  display: grid;
  grid-template: 20px 20px / repeat(4, 1fr);
  gap: 3px;
  width: 92px;
  margin-top: 4px;
  border-left: 1px solid #222;
}
```
